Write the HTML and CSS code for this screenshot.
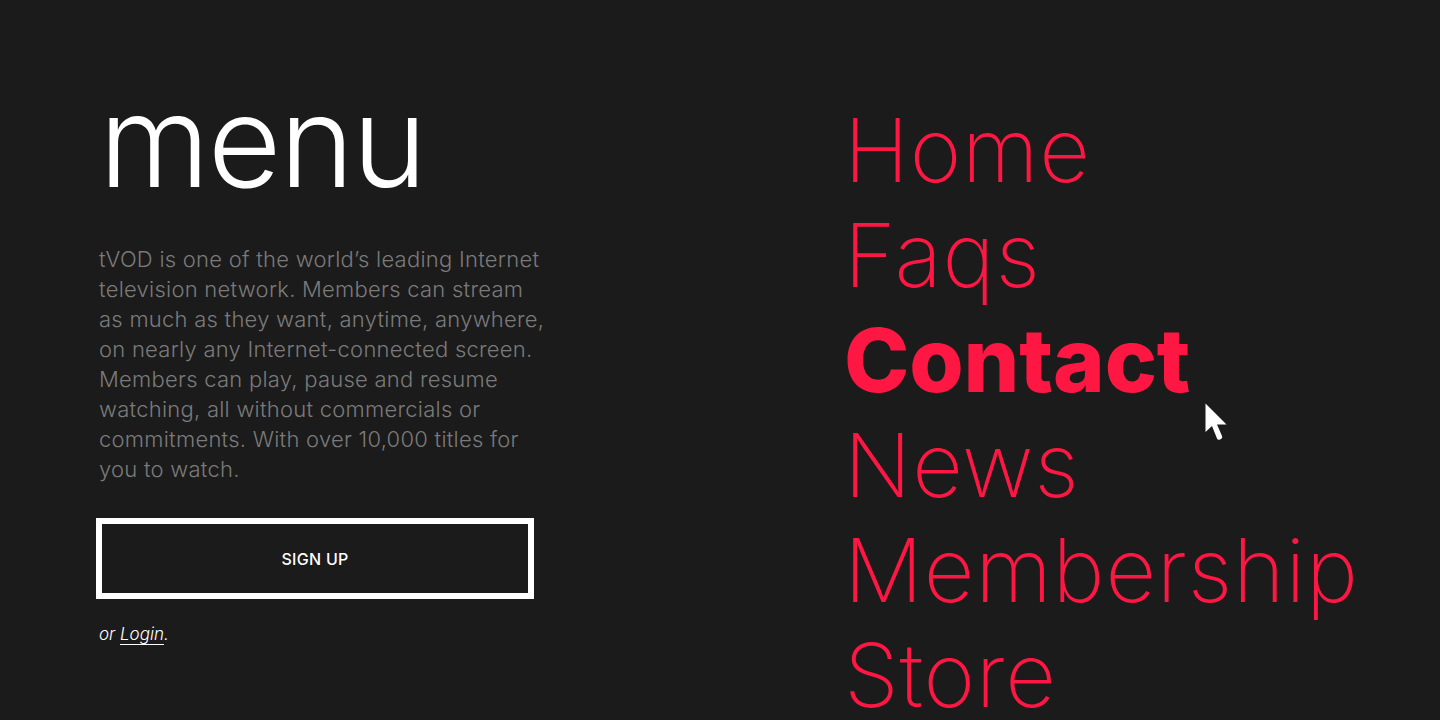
FILE: index.html
```html
<!DOCTYPE html>
<html lang="en">
<head>
<meta charset="utf-8">
<title>menu</title>
<link rel="stylesheet" href="styles.css">
</head>
<body>
<div class="page">
  <section class="intro">
    <h1 class="title">menu</h1>
    <p class="desc">tVOD is one of the world’s leading Internet television network. Members can stream as much as they want, anytime, anywhere, on nearly any Internet-connected screen. Members can play, pause and resume watching, all without commercials or commitments. With over 10,000 titles for you to watch.</p>
    <a class="signup" href="#">SIGN UP</a>
    <p class="login">or <a href="#">Login</a>.</p>
  </section>
  <nav class="nav">
    <a href="#">Home</a>
    <a href="#">Faqs</a>
    <a href="#" class="active">Contact</a>
    <a href="#">News</a>
    <a href="#">Membership</a>
    <a href="#">Store</a>
  </nav>
</div>
<svg class="cursor" width="28" height="44" viewBox="0 0 28 44">
  <path d="M1.5 1.5 L1.5 30 L8 24 L13 36.5 Q14 38.5 16 37.5 L17 37 Q19 36 18 34 L13 22.5 L22.5 22.5 Z" fill="#fff"/>
</svg>
</body>
</html>
```
FILE: styles.css
```css
html, body {
  margin: 0;
  padding: 0;
  background: #1b1b1b;
  height: 100%;
  overflow: hidden;
}
body {
  font-family: Inter, "Liberation Sans", sans-serif;
}
.page {
  display: flex;
  padding-left: 99px;
}
.intro {
  width: 450px;
  flex: none;
}
.title {
  margin: 66px 0 0 0;
  font-weight: 300;
  font-size: 127px;
  line-height: 150px;
  color: #fff;
  letter-spacing: -2px;
}
.desc {
  margin: 28px 0 0 0;
  font-size: 22px;
  line-height: 30px;
  color: #7a7a7a;
  font-weight: 300;
  letter-spacing: 0.25px;
}
.signup {
  display: flex;
  align-items: center;
  justify-content: center;
  box-sizing: border-box;
  width: 438px;
  height: 81px;
  margin: 34px 0 0 -3px;
  border: 6px solid #fff;
  color: #fff;
  text-decoration: none;
  font-size: 16px;
  font-weight: 500;
  letter-spacing: 0.3px;
}
.login {
  margin: 25px 0 0 0;
  font-size: 17px;
  font-style: italic;
  font-weight: 300;
  color: #fff;
}
.login a {
  color: #fff;
  text-decoration: underline;
  text-underline-offset: 4px;
}
.nav {
  display: flex;
  flex-direction: column;
  margin-left: 295px;
  padding-top: 98px;
}
.nav a {
  color: #ff1744;
  text-decoration: none;
  font-size: 88px;
  font-weight: 200;
  line-height: 105px;
  letter-spacing: 0.8px;
  white-space: nowrap;
}
.nav a.active {
  font-weight: 800;
  letter-spacing: -0.2px;
}
.cursor {
  position: absolute;
  left: 1204px;
  top: 402px;
}
```
